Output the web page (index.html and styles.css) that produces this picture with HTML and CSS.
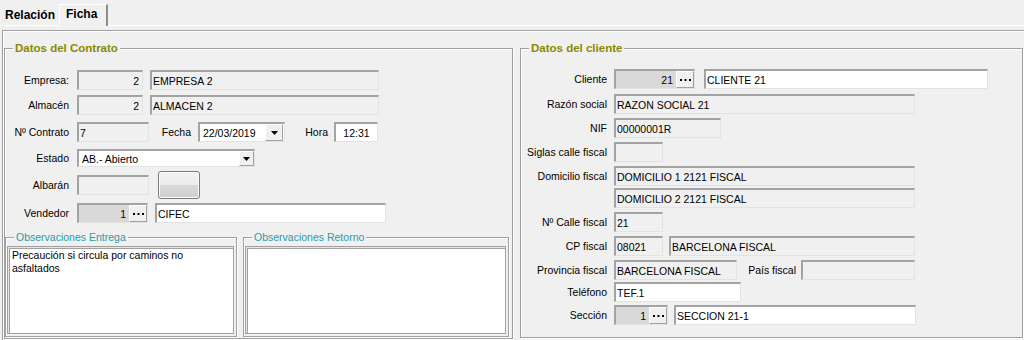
FILE: index.html
```html
<!DOCTYPE html>
<html lang="es">
<head>
<meta charset="utf-8">
<title>Ficha</title>
<link rel="stylesheet" href="styles.css">
</head>
<body>
<div class="tabs">
  <div class="tab">Relación</div>
  <div class="tab active">Ficha</div>
</div>
<div class="sheet">
  <section class="group contrato">
    <div class="legend">Datos del Contrato</div>
    <div class="row">
      <span class="lbl">Empresa:</span>
      <div class="fld num w66">2</div>
      <div class="fld w229 ml7">EMPRESA 2</div>
    </div>
    <div class="row mt5">
      <span class="lbl">Almacén</span>
      <div class="fld num w66">2</div>
      <div class="fld w229 ml7">ALMACEN 2</div>
    </div>
    <div class="row mt7">
      <span class="lbl">Nº Contrato</span>
      <div class="fld w72">7</div>
      <span class="lbl lbl-fecha">Fecha</span>
      <div class="fld white combo w87"><span class="txt">22/03/2019</span><span class="drop"><svg width="7" height="4" viewBox="0 0 7 4"><polygon points="0,0 7,0 3.5,4" fill="#000"/></svg></span></div>
      <span class="lbl lbl-hora">Hora</span>
      <div class="fld white center w44">12:31</div>
    </div>
    <div class="row mt7 h18">
      <span class="lbl">Estado</span>
      <div class="fld white combo w178 h18"><span class="txt">AB.- Abierto</span><span class="drop narrow"><svg width="7" height="4" viewBox="0 0 7 4"><polygon points="0,0 7,0 3.5,4" fill="#000"/></svg></span></div>
    </div>
    <div class="row mt4 h28">
      <span class="lbl">Albarán</span>
      <div class="fld w72"></div>
      <div class="btn"></div>
    </div>
    <div class="row mt4">
      <span class="lbl">Vendedor</span>
      <div class="fld lookup w71"><span class="val">1</span><span class="dots"><svg width="11" height="2" viewBox="0 0 11 2"><rect x="0" y="0" width="2" height="2"/><rect x="4.5" y="0" width="2" height="2"/><rect x="9" y="0" width="2" height="2"/></svg></span></div>
      <div class="fld white w231 ml7">CIFEC</div>
    </div>
    <div class="obs-row">
      <div class="obs entrega">
        <div class="legend obs-legend">Observaciones Entrega</div>
        <div class="memo">Precaución si circula por caminos no<br>asfaltados</div>
      </div>
      <div class="obs retorno">
        <div class="legend obs-legend">Observaciones Retorno</div>
        <div class="memo"></div>
      </div>
    </div>
  </section>

  <section class="group cliente">
    <div class="legend">Datos del cliente</div>
    <div class="row">
      <span class="lbl">Cliente</span>
      <div class="fld lookup w81"><span class="val">21</span><span class="dots"><svg width="11" height="2" viewBox="0 0 11 2"><rect x="0" y="0" width="2" height="2"/><rect x="4.5" y="0" width="2" height="2"/><rect x="9" y="0" width="2" height="2"/></svg></span></div>
      <div class="fld white w284 ml9">CLIENTE 21</div>
    </div>
    <div class="row mt5">
      <span class="lbl">Razón social</span>
      <div class="fld w301">RAZON SOCIAL 21</div>
    </div>
    <div class="row mt4">
      <span class="lbl">NIF</span>
      <div class="fld w107">00000001R</div>
    </div>
    <div class="row mt4">
      <span class="lbl">Siglas calle fiscal</span>
      <div class="fld w49"></div>
    </div>
    <div class="row mt4">
      <span class="lbl">Domicilio fiscal</span>
      <div class="fld w301">DOMICILIO 1 2121 FISCAL</div>
    </div>
    <div class="row mt2">
      <span class="lbl"></span>
      <div class="fld w301">DOMICILIO 2 2121 FISCAL</div>
    </div>
    <div class="row mt4">
      <span class="lbl">Nº Calle fiscal</span>
      <div class="fld w49">21</div>
    </div>
    <div class="row mt4">
      <span class="lbl">CP fiscal</span>
      <div class="fld w49">08021</div>
      <div class="fld w246 ml6">BARCELONA FISCAL</div>
    </div>
    <div class="row mt4">
      <span class="lbl">Provincia fiscal</span>
      <div class="fld w123">BARCELONA FISCAL</div>
      <span class="lbl lbl-pais">País fiscal</span>
      <div class="fld w114"></div>
    </div>
    <div class="row mt2">
      <span class="lbl">Teléfono</span>
      <div class="fld white w127">TEF.1</div>
    </div>
    <div class="row mt3">
      <span class="lbl">Sección</span>
      <div class="fld lookup w54"><span class="val">1</span><span class="dots"><svg width="11" height="2" viewBox="0 0 11 2"><rect x="0" y="0" width="2" height="2"/><rect x="4.5" y="0" width="2" height="2"/><rect x="9" y="0" width="2" height="2"/></svg></span></div>
      <div class="fld white w242 ml6">SECCION 21-1</div>
    </div>
  </section>
</div>
</body>
</html>
```
FILE: styles.css
```css
* { box-sizing: border-box; }

html, body {
  margin: 0;
  padding: 0;
}

body {
  width: 1024px;
  height: 340px;
  overflow: hidden;
  background: #f0f0f0;
  color: #000;
  font-family: "Liberation Sans", Arial, sans-serif;
  font-size: 10.5px;
}

/* ---------- tabs ---------- */
.tabs {
  display: flex;
  align-items: flex-end;
  height: 26px;
  border-bottom: 1px solid #ffffff;
  padding-left: 1px;
}

.tab {
  font-weight: bold;
  font-size: 12px;
  height: 19px;
  line-height: 19px;
  padding: 0 4px;
}

.tab.active {
  position: relative;
  height: 22px;
  line-height: 18px;
  margin-bottom: -1px;
  padding: 0 9px 0 6px;
  background: #f0f0f0;
  border-top: 1px solid #ffffff;
  border-left: 1px solid #ffffff;
  border-right: 2px solid #8c8c8c;
}

/* ---------- sheet ---------- */
.sheet {
  display: flex;
  gap: 7px;
  margin-top: 4px;
  margin-left: 2px;
  height: 310px;
  padding: 17px 0 0 1px;
  border-top: 1px solid #a0a0a0;
  border-left: 1px solid #a0a0a0;
  box-shadow: inset 1px 1px 0 #ffffff;
}

.group {
  position: relative;
  flex: none;
  border: 1px solid #a0a0a0;
  box-shadow: inset 1px 1px 0 #ffffff, 1px 1px 0 #ffffff;
}

.contrato {
  width: 509px;
  height: 291px;
  padding-top: 21px;
}

.cliente {
  width: 503px;
  height: 290px;
  padding-top: 20px;
}

.legend {
  position: absolute;
  top: -8px;
  left: 8px;
  padding: 0 2px;
  line-height: 14px;
  background: #f0f0f0;
  color: #8a8a00;
  font-weight: bold;
  font-size: 11.5px;
  white-space: nowrap;
}

.obs-legend {
  color: #2a9ba7;
  font-weight: normal;
  font-size: 10.5px;
}

/* ---------- rows ---------- */
.row {
  display: flex;
  align-items: center;
  height: 20px;
}

.h18 { height: 18px; }
.h28 { height: 28px; }

.mt2 { margin-top: 2px; }
.mt3 { margin-top: 3px; }
.mt4 { margin-top: 4px; }
.mt5 { margin-top: 5px; }
.mt7 { margin-top: 7px; }

.ml6 { margin-left: 6px; }
.ml7 { margin-left: 7px; }
.ml9 { margin-left: 9px; }

.lbl {
  flex: none;
  text-align: right;
  white-space: nowrap;
}

.contrato .lbl {
  width: 64px;
  margin-right: 8px;
}

.contrato .lbl.lbl-fecha {
  width: 42px;
  margin-right: 7px;
}

.contrato .lbl.lbl-hora {
  width: 43px;
  margin-right: 6px;
}

.cliente .lbl {
  width: 86px;
  margin-right: 7px;
}

.cliente .lbl.lbl-pais {
  width: 59px;
  margin-right: 5px;
}

/* ---------- fields ---------- */
.fld {
  flex: none;
  display: flex;
  align-items: center;
  height: 20px;
  padding: 0 2px 0 1px;
  border-style: solid;
  border-width: 2px 1px 1px 2px;
  border-color: #a3a3a3 #e3e3e3 #e3e3e3 #a3a3a3;
  background: #f0f0f0;
  white-space: nowrap;
  overflow: hidden;
}

.fld.h18 { height: 18px; }

.fld.white { background: #ffffff; }

.fld.num {
  justify-content: flex-end;
  padding-right: 3px;
}

.fld.center {
  justify-content: center;
  padding: 0;
}

.w44 { width: 44px; }
.w49 { width: 49px; }
.w54 { width: 54px; }
.w66 { width: 66px; }
.w71 { width: 71px; }
.w72 { width: 72px; }
.w81 { width: 81px; }
.w87 { width: 87px; }
.w107 { width: 107px; }
.w114 { width: 114px; }
.w123 { width: 123px; }
.w127 { width: 127px; }
.w178 { width: 178px; }
.w229 { width: 229px; }
.w231 { width: 231px; }
.w242 { width: 242px; }
.w246 { width: 246px; }
.w284 { width: 284px; }
.w301 { width: 301px; }

/* combo with drop button */
.combo {
  padding-right: 0;
  align-items: stretch;
}

.combo .txt {
  flex: 1;
  display: flex;
  align-items: center;
  padding-left: 2px;
}

.drop {
  flex: none;
  width: 18px;
  margin: 0 1px 0 0;
  display: flex;
  align-items: center;
  justify-content: center;
  background: #f0f0f0;
  border-style: solid;
  border-width: 1px;
  border-color: #ffffff #a0a0a0 #a0a0a0 #ffffff;
}

.drop.narrow {
  width: 15px;
  margin: 0;
}

/* lookup code field with ellipsis button */
.lookup {
  padding: 0;
  align-items: stretch;
  background: #d9d9d9;
}

.lookup .val {
  flex: 1;
  display: flex;
  align-items: center;
  justify-content: flex-end;
  padding-right: 3px;
}

.dots {
  flex: none;
  width: 18px;
  display: flex;
  align-items: center;
  justify-content: center;
  padding-top: 1px;
  background: #f0f0f0;
  border-style: solid;
  border-width: 1px;
  border-color: #ffffff #a0a0a0 #a0a0a0 #ffffff;
}

.dots svg { fill: #000; }

/* albarán image button */
.btn {
  flex: none;
  width: 42px;
  height: 28px;
  margin-left: 9px;
  border: 1px solid #7a7a7a;
  border-radius: 3px;
  background: linear-gradient(#f4f4f4 0%, #ececec 48%, #d8d8d8 52%, #cfcfcf 100%);
  box-shadow: inset 0 0 0 1px #fbfbfb;
}

/* ---------- observaciones ---------- */
.obs-row {
  display: flex;
  gap: 6px;
  margin-top: 14px;
}

.obs {
  position: relative;
  height: 100px;
  padding: 8px 2px 2px 1px;
  border: 1px solid #a0a0a0;
  box-shadow: inset 1px 1px 0 #ffffff, 1px 1px 0 #ffffff;
}

.entrega { width: 232px; }
.retorno { width: 266px; }

.memo {
  height: 100%;
  background: #ffffff;
  border: 1px solid #a0a0a0;
  box-shadow: inset 1px 1px 0 #e6e6e6, inset 2px 2px 0 #a0a0a0;
  padding: 2px 4px;
  line-height: 13px;
}
```
